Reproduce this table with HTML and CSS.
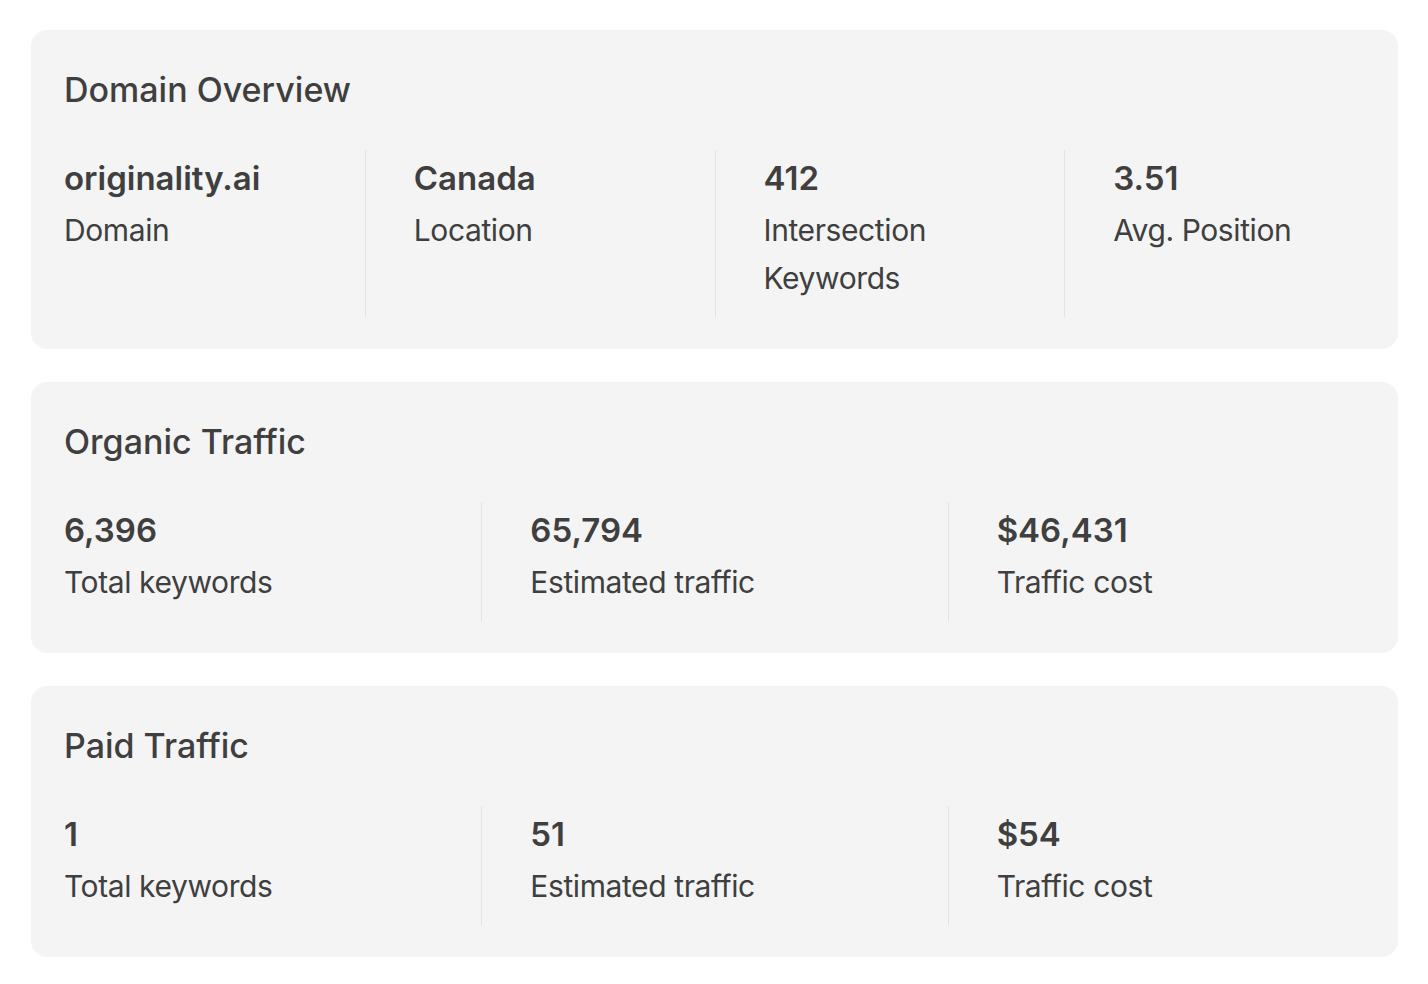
FILE: index.html
```html
<!DOCTYPE html>
<html lang="en">
<head>
<meta charset="utf-8">
<title>Domain Overview</title>
<link rel="stylesheet" href="styles.css">
</head>
<body>
<main class="page">
  <section class="card">
    <h2 class="card-title">Domain Overview</h2>
    <div class="stats">
      <div class="stat">
        <div class="stat-value">originality.ai</div>
        <div class="stat-label">Domain</div>
      </div>
      <div class="stat">
        <div class="stat-value">Canada</div>
        <div class="stat-label">Location</div>
      </div>
      <div class="stat">
        <div class="stat-value">412</div>
        <div class="stat-label">Intersection Keywords</div>
      </div>
      <div class="stat">
        <div class="stat-value">3.51</div>
        <div class="stat-label">Avg. Position</div>
      </div>
    </div>
  </section>

  <section class="card">
    <h2 class="card-title">Organic Traffic</h2>
    <div class="stats">
      <div class="stat">
        <div class="stat-value">6,396</div>
        <div class="stat-label">Total keywords</div>
      </div>
      <div class="stat">
        <div class="stat-value">65,794</div>
        <div class="stat-label">Estimated traffic</div>
      </div>
      <div class="stat">
        <div class="stat-value">$46,431</div>
        <div class="stat-label">Traffic cost</div>
      </div>
    </div>
  </section>

  <section class="card">
    <h2 class="card-title">Paid Traffic</h2>
    <div class="stats">
      <div class="stat">
        <div class="stat-value">1</div>
        <div class="stat-label">Total keywords</div>
      </div>
      <div class="stat">
        <div class="stat-value">51</div>
        <div class="stat-label">Estimated traffic</div>
      </div>
      <div class="stat">
        <div class="stat-value">$54</div>
        <div class="stat-label">Traffic cost</div>
      </div>
    </div>
  </section>
</main>
</body>
</html>
```
FILE: styles.css
```css
* {
  box-sizing: border-box;
}

html, body {
  margin: 0;
  padding: 0;
  background: #ffffff;
}

body {
  font-family: Inter, "Noto Sans", "Liberation Sans", sans-serif;
  color: #3f3f3f;
}

.page {
  display: flex;
  flex-direction: column;
  gap: 33px;
  padding: 30px 30px 0 31px;
}

.card {
  background: #f4f4f4;
  border-radius: 16px;
  padding: 32px 32px 32px 33px;
}

.card-title {
  margin: 0 0 32px 0;
  font-size: 34px;
  line-height: 56px;
  font-weight: 500;
  letter-spacing: 0;
}

.stats {
  display: flex;
}

.stat {
  flex: 1 1 0;
  box-sizing: content-box;
  padding: 0 48px 15px 48px;
  border-right: 1px solid #e3e3e3;
  min-width: 0;
}

.stat:first-child {
  padding-left: 0;
}

.stat:last-child {
  padding-right: 0;
  border-right: none;
}

.stat-value {
  font-size: 33px;
  line-height: 56px;
  font-weight: 600;
  letter-spacing: 0;
}

.stat-label {
  font-size: 30px;
  line-height: 48px;
  font-weight: 400;
  letter-spacing: -0.4px;
}
```
